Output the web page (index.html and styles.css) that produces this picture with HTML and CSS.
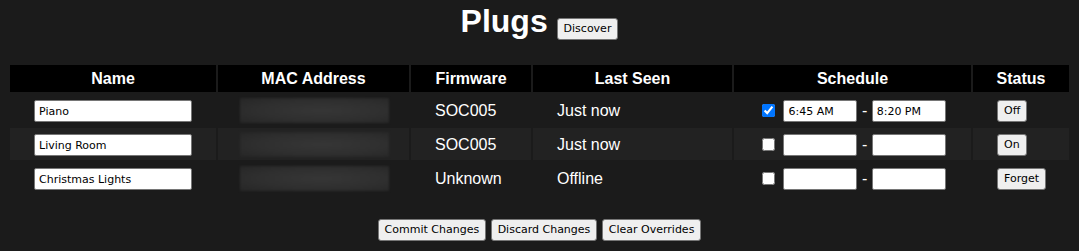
FILE: index.html
```html
<!DOCTYPE html>
<html lang="en">
<head>
    <meta charset="UTF-8">
    <meta name="viewport" content="width=device-width, initial-scale=1.0">
    <title>Plugs</title>
    <link rel="stylesheet" href="styles.css">
</head>
<body>
    <h1 class="title">Plugs <button class="btn">Discover</button></h1>

    <table class="plugs">
        <colgroup>
            <col class="col-name">
            <col class="col-mac">
            <col class="col-fw">
            <col class="col-seen">
            <col class="col-sched">
            <col class="col-status">
        </colgroup>
        <thead>
            <tr>
                <th>Name</th>
                <th>MAC Address</th>
                <th>Firmware</th>
                <th>Last Seen</th>
                <th>Schedule</th>
                <th>Status</th>
            </tr>
        </thead>
        <tbody>
            <tr>
                <td><input class="name-input" type="text" value="Piano"></td>
                <td class="mac"><div class="mac-blur"></div></td>
                <td>SOC005</td>
                <td>Just now</td>
                <td><input type="checkbox" class="sched-on" checked> <input class="time-input" type="text" value="6:45 AM"> - <input class="time-input" type="text" value="8:20 PM"></td>
                <td><button class="btn">Off</button></td>
            </tr>
            <tr>
                <td><input class="name-input" type="text" value="Living Room"></td>
                <td class="mac"><div class="mac-blur"></div></td>
                <td>SOC005</td>
                <td>Just now</td>
                <td><input type="checkbox" class="sched-on"> <input class="time-input" type="text"> - <input class="time-input" type="text"></td>
                <td><button class="btn">On</button></td>
            </tr>
            <tr>
                <td><input class="name-input" type="text" value="Christmas Lights"></td>
                <td class="mac"><div class="mac-blur"></div></td>
                <td>Unknown</td>
                <td>Offline</td>
                <td><input type="checkbox" class="sched-on"> <input class="time-input" type="text"> - <input class="time-input" type="text"></td>
                <td><button class="btn">Forget</button></td>
            </tr>
        </tbody>
    </table>

    <div class="actions">
        <button class="btn">Commit Changes</button>
        <button class="btn">Discard Changes</button>
        <button class="btn">Clear Overrides</button>
    </div>
</body>
</html>
```

FILE: styles.css
```css
body {
    margin: 0;
    padding: 3px 8px 8px;
    background-color: #1b1b1b;
    color: #fff;
    font-family: "Liberation Sans", Arial, sans-serif;
    font-size: 16px;
}

.title {
    margin: 0 0 23px;
    text-align: center;
    font-size: 32px;
    line-height: 37px;
}

.btn {
    font-family: "DejaVu Sans", Tahoma, sans-serif;
    font-size: 11px;
    font-weight: normal;
    line-height: 18px;
    height: 22px;
    padding: 1px 6px;
    color: #000;
    background: #efefef;
    border: 1px solid #767676;
    border-radius: 3px;
    box-sizing: border-box;
}

.plugs {
    width: 100%;
    table-layout: fixed;
    border-spacing: 2px;
}

.col-name { width: 206px; }
.col-mac { width: 191px; }
.col-fw { width: 120px; }
.col-seen { width: 199px; }
.col-sched { width: 237px; }
.col-status { width: 96px; }

.plugs th {
    background: #000;
    padding: 4px 0;
    line-height: 19px;
    font-weight: bold;
}

.plugs td {
    padding: 6px 24px 4px;
    line-height: 22px;
    vertical-align: top;
    white-space: nowrap;
}

.plugs tbody tr:nth-child(2) td {
    background: #222;
}

.plugs td .btn {
    vertical-align: top;
}

input[type="text"] {
    font-family: "DejaVu Sans", Tahoma, sans-serif;
    font-size: 11px;
    height: 22px;
    padding: 1px 4px;
    margin: 0;
    border: 1px solid #767676;
    border-radius: 2px;
    background: #fff;
    color: #000;
    box-sizing: border-box;
    vertical-align: top;
}

.name-input {
    width: 158px;
}

.time-input {
    width: 74px;
}

.sched-on {
    width: 13px;
    height: 13px;
    margin: 4px 4px 0 4px;
    vertical-align: top;
}

.plugs td.mac {
    padding: 4px 22px 3px;
}

.mac-blur {
    width: 149px;
    height: 25px;
    background: radial-gradient(ellipse at 55% 50%, #363636 0%, #2f2f2f 55%, #262626 100%);
    filter: blur(1px);
}

.actions {
    margin-top: 23px;
    text-align: center;
}
```
